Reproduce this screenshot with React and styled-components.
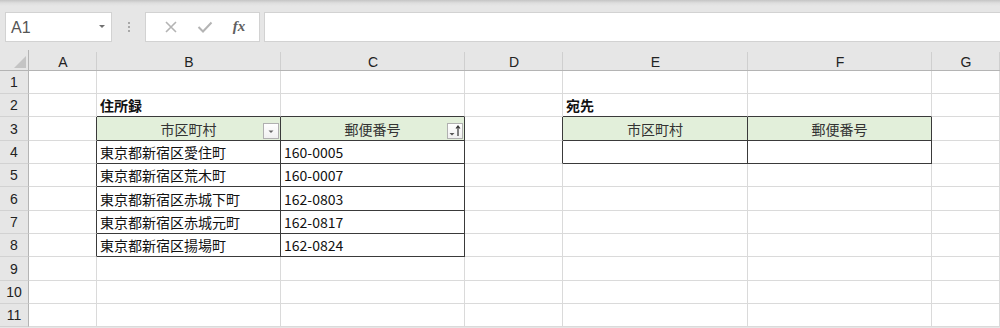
import React from "react";
import styled, { createGlobalStyle } from "styled-components";

const GlobalStyle = createGlobalStyle`
  html, body {
    margin: 0;
    padding: 0;
    background: #ffffff;
    overflow: hidden;
  }
  body {
    font-family: "Liberation Sans", "Noto Sans CJK JP", sans-serif;
  }
`;

const COLS = ["A", "B", "C", "D", "E", "F", "G"];
const ROW_H = [23, 23, 24, 23, 23, 24, 23, 23, 24, 23, 23];

// [row, col] -> content ; col index 0 = A
const CELLS = {
  "2-1": { text: "住所録", bold: true },
  "3-1": { text: "市区町村", head: true, filter: "down" },
  "3-2": { text: "郵便番号", head: true, filter: "sort" },
  "4-1": { text: "東京都新宿区愛住町" },
  "4-2": { text: "160-0005" },
  "5-1": { text: "東京都新宿区荒木町" },
  "5-2": { text: "160-0007" },
  "6-1": { text: "東京都新宿区赤城下町" },
  "6-2": { text: "162-0803" },
  "7-1": { text: "東京都新宿区赤城元町" },
  "7-2": { text: "162-0817" },
  "8-1": { text: "東京都新宿区揚場町" },
  "8-2": { text: "162-0824" },
  "2-4": { text: "宛先", bold: true },
  "3-4": { text: "市区町村", head: true },
  "3-5": { text: "郵便番号", head: true },
};

const inTable = (r, c) =>
  (r >= 3 && r <= 8 && c >= 1 && c <= 2) ||
  (r >= 3 && r <= 4 && c >= 4 && c <= 5);

const Page = styled.div`
  width: 1000px;
  height: 328px;
  display: flex;
  flex-direction: column;
  background: #e6e6e6;
`;

const FormulaBar = styled.div`
  height: 50px;
  box-sizing: border-box;
  padding: 12px 0 8px 5px;
  display: flex;
  align-items: stretch;
  background: linear-gradient(#c4c4c4 0px, #dedede 3px, #e6e6e6 6px);
`;

const NameBox = styled.div`
  width: 107px;
  box-sizing: border-box;
  background: #ffffff;
  border: 1px solid #d2d2d2;
  display: flex;
  align-items: center;
  justify-content: space-between;
  padding: 1px 6px 0 5px;
  font-size: 16px;
  color: #555555;
`;

const Caret = styled.span`
  width: 0;
  height: 0;
  border-left: 3px solid transparent;
  border-right: 3px solid transparent;
  border-top: 3px solid #707070;
  margin-bottom: 3px;
`;

const Grip = styled.div`
  width: 33px;
  display: flex;
  flex-direction: column;
  align-items: center;
  justify-content: center;
  gap: 2px;
  span {
    width: 2px;
    height: 2px;
    background: #a8a8a8;
  }
`;

const FxBox = styled.div`
  width: 115px;
  box-sizing: border-box;
  background: #ffffff;
  border: 1px solid #d2d2d2;
  display: flex;
  align-items: center;
  justify-content: space-around;
  padding: 0 4px 0 8px;
`;

const Fx = styled.span`
  font-family: "Liberation Serif", serif;
  font-style: italic;
  font-weight: bold;
  font-size: 15px;
  color: #606060;
  margin-top: -2px;
`;

const FormulaInput = styled.div`
  flex: 1;
  margin-left: 4px;
  background: #ffffff;
  border: 1px solid #d2d2d2;
  border-right: none;
`;

const Sheet = styled.div`
  display: grid;
  grid-template-columns: 29px 68px 184px 184px 98px 185px 184px 1fr;
  grid-template-rows: 21px ${ROW_H.map((h) => h + "px").join(" ")};
  background: #ffffff;
`;

const Corner = styled.div`
  background: #e6e6e6;
  border-bottom: 1px solid #b4b4b4;
  border-right: 1px solid #b4b4b4;
  box-sizing: border-box;
  position: relative;
  &::after {
    content: "";
    position: absolute;
    right: 2px;
    bottom: 2px;
    width: 0;
    height: 0;
    border-left: 12px solid transparent;
    border-bottom: 12px solid #c4c4c4;
  }
`;

const ColHead = styled.div`
  background: #e6e6e6;
  box-sizing: border-box;
  border-bottom: 1px solid #b4b4b4;
  display: flex;
  align-items: center;
  justify-content: center;
  font-size: 14px;
  color: #222;
  padding-top: 3px;
  position: relative;
  &::after {
    content: "";
    position: absolute;
    right: 0;
    top: 2px;
    bottom: 0;
    width: 1px;
    background: #cfcfcf;
  }
`;

const RowHead = styled.div`
  background: #e6e6e6;
  box-sizing: border-box;
  border-right: 1px solid #b4b4b4;
  border-bottom: 1px solid #d2d2d2;
  display: flex;
  align-items: center;
  justify-content: center;
  font-size: 14px;
  color: #222;
`;

const Cell = styled.div`
  box-sizing: border-box;
  position: relative;
  border-right: 1px solid ${(p) => (p.$darkRight ? "#3a3a3a" : "#dadada")};
  border-bottom: 1px solid ${(p) => (p.$darkBottom ? "#3a3a3a" : "#dadada")};
  background: ${(p) => (p.$head ? "#e2efda" : "#ffffff")};
  display: flex;
  align-items: center;
  justify-content: ${(p) => (p.$head ? "center" : "flex-start")};
  padding-left: ${(p) => (p.$head ? "0" : "3px")};
  font-family: "Noto Sans CJK JP", "Liberation Sans", sans-serif;
  font-size: 14px;
  font-weight: ${(p) => (p.$bold ? 700 : 400)};
  color: ${(p) => (p.$head ? "#333" : "#111")};
  white-space: nowrap;
  overflow: visible;
`;

const FilterButton = styled.div`
  position: absolute;
  right: 1px;
  bottom: 1px;
  width: 16px;
  height: 16px;
  box-sizing: border-box;
  border: 1px solid #b0b0b0;
  background: linear-gradient(#ffffff, #f0f0f0);
  display: flex;
  align-items: center;
  justify-content: center;
`;

const CrossIcon = () => (
  <svg width="14" height="14" viewBox="0 0 14 14">
    <path d="M2 2 L12 12 M12 2 L2 12" stroke="#b4b4b4" strokeWidth="1.6" fill="none" />
  </svg>
);

const CheckIcon = () => (
  <svg width="16" height="14" viewBox="0 0 16 14">
    <path d="M1.5 7 L6 11.5 L14.5 2.5" stroke="#b4b4b4" strokeWidth="2" fill="none" />
  </svg>
);

const FilterGlyph = ({ kind }) =>
  kind === "sort" ? (
    <svg width="14" height="14" viewBox="0 0 14 14">
      <path d="M1.5 9 L6.5 9 L4 11.5 Z" fill="#555" />
      <path d="M10 12 L10 2.5 M8 4.5 L10 2 L12 4.5" stroke="#333" strokeWidth="1.2" fill="none" />
    </svg>
  ) : (
    <svg width="14" height="14" viewBox="0 0 14 14">
      <path d="M4.5 6.5 L9.5 6.5 L7 9 Z" fill="#666" />
    </svg>
  );

const App = () => {
  const rows = ROW_H.map((_, i) => i + 1);
  return (
    <>
      <GlobalStyle />
      <Page>
        <FormulaBar>
          <NameBox>
            A1
            <Caret />
          </NameBox>
          <Grip>
            <span />
            <span />
            <span />
          </Grip>
          <FxBox>
            <CrossIcon />
            <CheckIcon />
            <Fx>fx</Fx>
          </FxBox>
          <FormulaInput />
        </FormulaBar>
        <Sheet>
          <Corner />
          {COLS.map((c) => (
            <ColHead key={c}>{c}</ColHead>
          ))}
          {rows.map((r) => (
            <React.Fragment key={r}>
              <RowHead>{r}</RowHead>
              {COLS.map((_, c) => {
                const data = CELLS[`${r}-${c}`] || {};
                return (
                  <Cell
                    key={c}
                    $head={data.head}
                    $bold={data.bold}
                    $darkRight={inTable(r, c) || inTable(r, c + 1)}
                    $darkBottom={inTable(r, c) || inTable(r + 1, c)}
                  >
                    {data.text}
                    {data.filter && (
                      <FilterButton>
                        <FilterGlyph kind={data.filter} />
                      </FilterButton>
                    )}
                  </Cell>
                );
              })}
            </React.Fragment>
          ))}
        </Sheet>
      </Page>
    </>
  );
};

export default App;
